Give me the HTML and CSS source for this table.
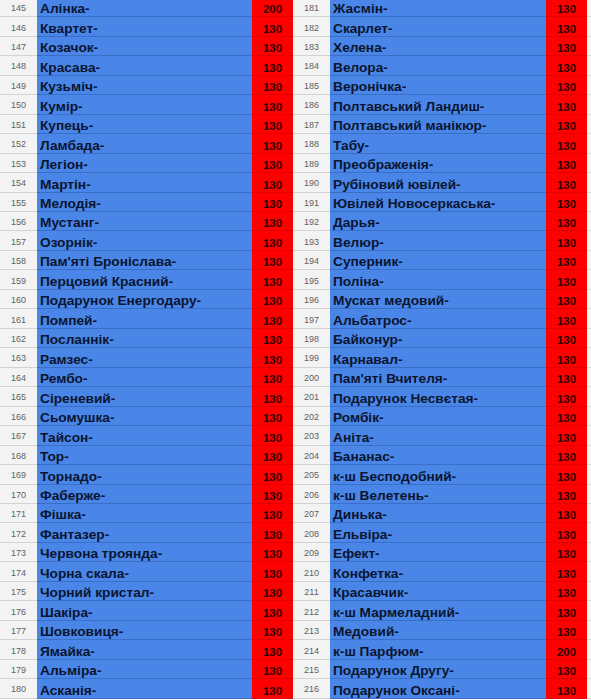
FILE: index.html
```html
<!DOCTYPE html>
<html lang="uk">
<head>
<meta charset="utf-8">
<title>Сорти</title>
<link rel="stylesheet" href="styles.css">
</head>
<body>
<div class="sheet">
<div class="num">145</div><div class="name">Алінка-</div><div class="val">200</div><div class="num">181</div><div class="name">Жасмін-</div><div class="val">130</div><div class="pad"></div>
<div class="num">146</div><div class="name">Квартет-</div><div class="val">130</div><div class="num">182</div><div class="name">Скарлет-</div><div class="val">130</div><div class="pad"></div>
<div class="num">147</div><div class="name">Козачок-</div><div class="val">130</div><div class="num">183</div><div class="name">Хелена-</div><div class="val">130</div><div class="pad"></div>
<div class="num">148</div><div class="name">Красава-</div><div class="val">130</div><div class="num">184</div><div class="name">Велора-</div><div class="val">130</div><div class="pad"></div>
<div class="num">149</div><div class="name">Кузьміч-</div><div class="val">130</div><div class="num">185</div><div class="name">Веронічка-</div><div class="val">130</div><div class="pad"></div>
<div class="num">150</div><div class="name">Кумір-</div><div class="val">130</div><div class="num">186</div><div class="name">Полтавський Ландиш-</div><div class="val">130</div><div class="pad"></div>
<div class="num">151</div><div class="name">Купець-</div><div class="val">130</div><div class="num">187</div><div class="name">Полтавський манікюр-</div><div class="val">130</div><div class="pad"></div>
<div class="num">152</div><div class="name">Ламбада-</div><div class="val">130</div><div class="num">188</div><div class="name">Табу-</div><div class="val">130</div><div class="pad"></div>
<div class="num">153</div><div class="name">Легіон-</div><div class="val">130</div><div class="num">189</div><div class="name">Преображенія-</div><div class="val">130</div><div class="pad"></div>
<div class="num">154</div><div class="name">Мартін-</div><div class="val">130</div><div class="num">190</div><div class="name">Рубіновий ювілей-</div><div class="val">130</div><div class="pad"></div>
<div class="num">155</div><div class="name">Мелодія-</div><div class="val">130</div><div class="num">191</div><div class="name">Ювілей Новосеркаська-</div><div class="val">130</div><div class="pad"></div>
<div class="num">156</div><div class="name">Мустанг-</div><div class="val">130</div><div class="num">192</div><div class="name">Дарья-</div><div class="val">130</div><div class="pad"></div>
<div class="num">157</div><div class="name">Озорнік-</div><div class="val">130</div><div class="num">193</div><div class="name">Велюр-</div><div class="val">130</div><div class="pad"></div>
<div class="num">158</div><div class="name">Пам'яті Броніслава-</div><div class="val">130</div><div class="num">194</div><div class="name">Суперник-</div><div class="val">130</div><div class="pad"></div>
<div class="num">159</div><div class="name">Перцовий Красний-</div><div class="val">130</div><div class="num">195</div><div class="name">Поліна-</div><div class="val">130</div><div class="pad"></div>
<div class="num">160</div><div class="name">Подарунок Енергодару-</div><div class="val">130</div><div class="num">196</div><div class="name">Мускат медовий-</div><div class="val">130</div><div class="pad"></div>
<div class="num">161</div><div class="name">Помпей-</div><div class="val">130</div><div class="num">197</div><div class="name">Альбатрос-</div><div class="val">130</div><div class="pad"></div>
<div class="num">162</div><div class="name">Посланнік-</div><div class="val">130</div><div class="num">198</div><div class="name">Байконур-</div><div class="val">130</div><div class="pad"></div>
<div class="num">163</div><div class="name">Рамзес-</div><div class="val">130</div><div class="num">199</div><div class="name">Карнавал-</div><div class="val">130</div><div class="pad"></div>
<div class="num">164</div><div class="name">Рембо-</div><div class="val">130</div><div class="num">200</div><div class="name">Пам'яті Вчителя-</div><div class="val">130</div><div class="pad"></div>
<div class="num">165</div><div class="name">Сіреневий-</div><div class="val">130</div><div class="num">201</div><div class="name">Подарунок Несвєтая-</div><div class="val">130</div><div class="pad"></div>
<div class="num">166</div><div class="name">Сьомушка-</div><div class="val">130</div><div class="num">202</div><div class="name">Ромбік-</div><div class="val">130</div><div class="pad"></div>
<div class="num">167</div><div class="name">Тайсон-</div><div class="val">130</div><div class="num">203</div><div class="name">Аніта-</div><div class="val">130</div><div class="pad"></div>
<div class="num">168</div><div class="name">Тор-</div><div class="val">130</div><div class="num">204</div><div class="name">Бананас-</div><div class="val">130</div><div class="pad"></div>
<div class="num">169</div><div class="name">Торнадо-</div><div class="val">130</div><div class="num">205</div><div class="name">к-ш Бесподобний-</div><div class="val">130</div><div class="pad"></div>
<div class="num">170</div><div class="name">Фаберже-</div><div class="val">130</div><div class="num">206</div><div class="name">к-ш Велетень-</div><div class="val">130</div><div class="pad"></div>
<div class="num">171</div><div class="name">Фішка-</div><div class="val">130</div><div class="num">207</div><div class="name">Динька-</div><div class="val">130</div><div class="pad"></div>
<div class="num">172</div><div class="name">Фантазер-</div><div class="val">130</div><div class="num">208</div><div class="name">Ельвіра-</div><div class="val">130</div><div class="pad"></div>
<div class="num">173</div><div class="name">Червона троянда-</div><div class="val">130</div><div class="num">209</div><div class="name">Ефект-</div><div class="val">130</div><div class="pad"></div>
<div class="num">174</div><div class="name">Чорна скала-</div><div class="val">130</div><div class="num">210</div><div class="name">Конфетка-</div><div class="val">130</div><div class="pad"></div>
<div class="num">175</div><div class="name">Чорний кристал-</div><div class="val">130</div><div class="num">211</div><div class="name">Красавчик-</div><div class="val">130</div><div class="pad"></div>
<div class="num">176</div><div class="name">Шакіра-</div><div class="val">130</div><div class="num">212</div><div class="name">к-ш Мармеладний-</div><div class="val">130</div><div class="pad"></div>
<div class="num">177</div><div class="name">Шовковиця-</div><div class="val">130</div><div class="num">213</div><div class="name">Медовий-</div><div class="val">130</div><div class="pad"></div>
<div class="num">178</div><div class="name">Ямайка-</div><div class="val">130</div><div class="num">214</div><div class="name">к-ш Парфюм-</div><div class="val">200</div><div class="pad"></div>
<div class="num">179</div><div class="name">Альміра-</div><div class="val">130</div><div class="num">215</div><div class="name">Подарунок Другу-</div><div class="val">130</div><div class="pad"></div>
<div class="num">180</div><div class="name">Асканія-</div><div class="val">130</div><div class="num">216</div><div class="name">Подарунок Оксані-</div><div class="val">130</div><div class="pad"></div>
</div>
</body>
</html>
```
FILE: styles.css
```css
html, body {
  margin: 0;
  padding: 0;
  background: #ffffff;
  overflow: hidden;
}

body {
  font-family: "Liberation Sans", Arial, sans-serif;
}

.sheet {
  display: grid;
  grid-template-columns: 37px 215px 41px 37px 216px 41px 4px;
  grid-auto-rows: 19.47px;
  width: 591px;
  margin-top: -2.2px;
}

.sheet > div {
  box-sizing: border-box;
  border-bottom: 1px solid transparent;
  display: flex;
  overflow: hidden;
  white-space: nowrap;
}

.num {
  background: #f3f3f3;
  border-bottom-color: #d3d3d3 !important;
  color: #5f5f5f;
  font-size: 9px;
  justify-content: center;
  align-items: center;
  padding-top: 2px;
}

.name {
  background: #4a86e8;
  border-bottom-color: #3a6fc9 !important;
  color: #0a1530;
  font-weight: bold;
  font-size: 13.7px;
  line-height: 15px;
  align-items: flex-end;
  padding: 0 0 0 3px;
}

.val {
  background: #ff0000;
  border-bottom-color: #e60000 !important;
  color: #330000;
  font-weight: bold;
  font-size: 11.5px;
  line-height: 12px;
  justify-content: center;
  align-items: flex-end;
  padding-bottom: 1px;
}

.pad {
  background: #f6f6f6;
  border-bottom-color: #dddddd !important;
}
```
